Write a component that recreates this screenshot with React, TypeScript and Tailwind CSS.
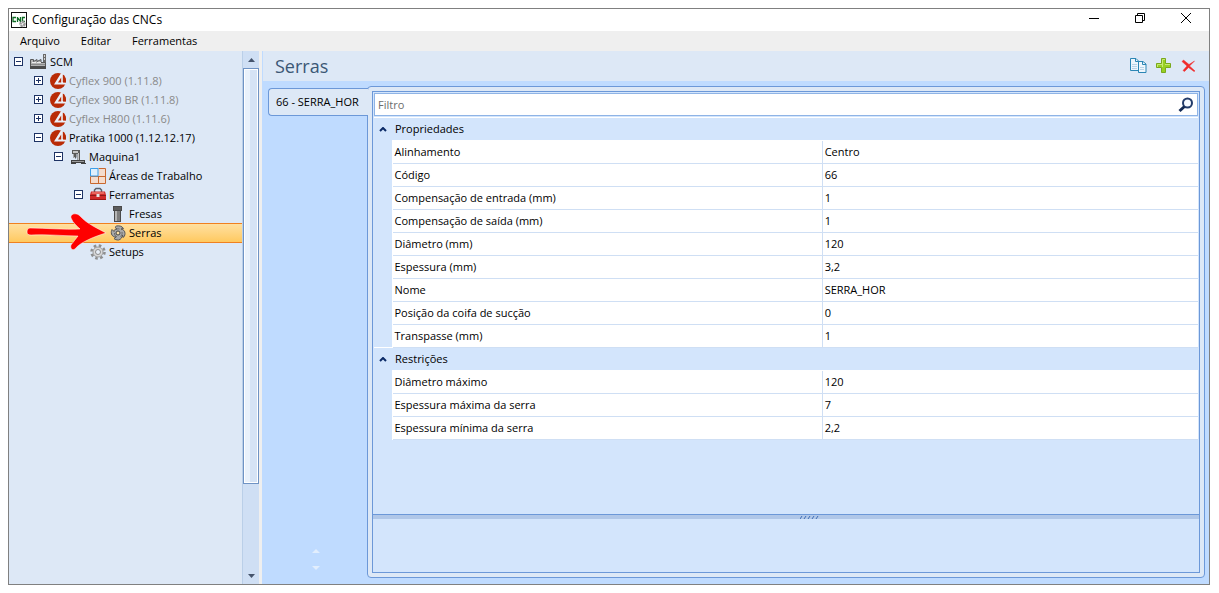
import React from "react";

type NodeProps = {
  label: string;
  pad: string;
  icon: React.ReactNode;
  sign?: "+" | "-";
  muted?: boolean;
  selected?: boolean;
};

const AppIcon = () => (
  <svg width="16" height="16" viewBox="0 0 16 16">
    <rect x="0.5" y="0.5" width="15" height="15" fill="#fff" stroke="#111" />
    <path
      d="M5 5.500H2V9.500H5M6.500 10V5M7 6L9 9M9.500 10V5M14 5.500H11.500V9.500H14"
      fill="none"
      stroke="#0c6b23"
      strokeWidth="1.300"
    />
    <circle cx="11.500" cy="12" r="2" fill="none" stroke="#9a9a9a" strokeWidth="2.500" strokeDasharray="2 .6" />
  </svg>
);

const FactoryIcon = () => (
  <svg width="17" height="16" viewBox="0 0 17 16">
    <path d="M13 0h3v10h-3z" fill="#6a6a6a" />
    <path d="M14 1h1v2h-1zM14 4h1v2h-1z" fill="#d4d4d4" />
    <path d="M.5 14V5.500H3.500V7.500L7 5.500V7.500L11 5.500V8.500H15.500V14Z" fill="#b4b4b4" stroke="#585858" />
    <path d="M2 8h4v1H2zM7 8h4v1H7z" fill="#ededed" />
    <path d="M1 10h14v1H1z" fill="#8b8b8b" />
    <path d="M0 12h16v3H0z" fill="#4c4c4c" />
  </svg>
);

const ScmIcon = () => (
  <svg width="16" height="16" viewBox="0 0 16 16">
    <circle cx="8" cy="8" r="8" fill="#b92b06" />
    <path d="M11 0L13 1V9.500H16V11.500H4L10.500 1Z" fill="#eaf0f9" />
    <path d="M11.200 4.500V9.500H8Z" fill="#b92b06" />
    <path d="M12.800 1.500C15 3 16 5.500 16 8V9.500L12.800 9Z" fill="#b92b06" />
  </svg>
);

const MachineIcon = () => (
  <svg width="16" height="16" viewBox="0 0 16 16">
    <path d="M2 1H10V12H7.500V5H6.500V8L5.500 10L4.500 8H3V5H2Z" fill="#5a5a5a" />
    <path d="M3 2h5v2H3zM8 4h1v8H8z" fill="#c4c4c4" />
    <path d="M3.500 5v4" stroke="#a8a8a8" />
    <path d="M1 11h14v3h1v1h-5v-1H6v1H1z" fill="#424242" />
    <path d="M2 12h12v1H2z" fill="#9c9c9c" />
  </svg>
);

const AreasIcon = () => (
  <svg width="16" height="16" viewBox="0 0 16 16">
    <path d="M1 8.500H15V15H1zM8.500 1H15V8H8.500z" fill="#f4dccd" />
    <path d="M8.500 .5h7v15H.5v-7M.5 8.500h15M8.500 8v7.500" fill="none" stroke="#c9682e" />
    <path d="M.5 .5h7.500v7.500H.5z" fill="#dff0fd" stroke="#3b9ee8" />
  </svg>
);

const ToolboxIcon = () => (
  <svg width="16" height="16" viewBox="0 0 16 16">
    <path d="M4.500 5V3L6 1.500H10L11.500 3V5" fill="none" stroke="#59606b" strokeWidth="1.500" />
    <path d="M1 4.500H15L16 8V13H0V8Z" fill="#d02a2a" />
    <path d="M2 5h12l.5 2h-13z" fill="#e8655e" />
    <path d="M0 8h16v1H0z" fill="#8e1a1a" />
    <path d="M6.500 7h3v3h-3z" fill="#e6e6e6" />
    <path d="M0 12h16v1H0z" fill="#9c1616" />
  </svg>
);

const CutterIcon = () => (
  <svg width="16" height="16" viewBox="0 0 16 16">
    <path d="M3 0h9v5h-1v11H4V5H3z" fill="#4a4a4a" />
    <path d="M5 5h2v10H5z" fill="#b5b5b5" />
    <path d="M7 5h3v10H7z" fill="#7d7d7d" />
    <path d="M4 1h7v3H4z" fill="#5c5c5c" />
  </svg>
);

const SawIcon = () => (
  <svg width="16" height="16" viewBox="0 0 16 16">
    <path
      d="M7 4C5 3 5 1.500 6.500 1C9 .5 12 1 13.500 3.500L11 4C13.500 4.500 15 6 15 8.500C15 10.500 14 12 13 12.500L12.500 10C12 12.500 11 14.500 8.500 15C6.500 15 5 14.500 4 13.500L6 12C4 12 2 11 1.500 9C1 7 1.500 5.500 2 4.500L4 6.500C4 5 5 4 7 4Z"
      fill="#a9a9a9"
      stroke="#565656"
    />
    <path d="M5 5C6 4 8 3.500 9.500 4M12 7C12.500 9 11.500 10.500 10.500 11.500M7 12C5 11 4.500 9.500 4.500 8" fill="none" stroke="#6a6a6a" />
    <circle cx="8" cy="8" r="2" fill="#ffe3a6" stroke="#444" />
  </svg>
);

const GearIcon = () => (
  <svg width="16" height="16" viewBox="0 0 16 16">
    <circle cx="8" cy="8" r="6.500" fill="none" stroke="#8d8d8d" strokeWidth="2.500" strokeDasharray="2.600 2.500" />
    <circle cx="8" cy="8" r="5" fill="#d8d8d8" stroke="#9c9c9c" />
    <circle cx="8" cy="8" r="2.500" fill="#e8eff8" stroke="#8d8d8d" />
  </svg>
);

const nodes: NodeProps[] = [
  { label: "SCM", pad: "pl-[5px]", icon: <FactoryIcon />, sign: "-" },
  { label: "Cyflex 900 (1.11.8)", pad: "pl-[25px]", icon: <ScmIcon />, sign: "+", muted: true },
  { label: "Cyflex 900 BR (1.11.8)", pad: "pl-[25px]", icon: <ScmIcon />, sign: "+", muted: true },
  { label: "Cyflex H800 (1.11.6)", pad: "pl-[25px]", icon: <ScmIcon />, sign: "+", muted: true },
  { label: "Pratika 1000 (1.12.12.17)", pad: "pl-[25px]", icon: <ScmIcon />, sign: "-" },
  { label: "Maquina1", pad: "pl-[45px]", icon: <MachineIcon />, sign: "-" },
  { label: "Áreas de Trabalho", pad: "pl-[65px]", icon: <AreasIcon /> },
  { label: "Ferramentas", pad: "pl-[65px]", icon: <ToolboxIcon />, sign: "-" },
  { label: "Fresas", pad: "pl-[85px]", icon: <CutterIcon /> },
  { label: "Serras", pad: "pl-[85px]", icon: <SawIcon />, selected: true },
  { label: "Setups", pad: "pl-[65px]", icon: <GearIcon /> },
];

const groups = [
  {
    title: "Propriedades",
    rows: [
      ["Alinhamento", "Centro"],
      ["Código", "66"],
      ["Compensação de entrada (mm)", "1"],
      ["Compensação de saída (mm)", "1"],
      ["Diâmetro (mm)", "120"],
      ["Espessura (mm)", "3,2"],
      ["Nome", "SERRA_HOR"],
      ["Posição da coifa de sucção", "0"],
      ["Transpasse (mm)", "1"],
    ],
  },
  {
    title: "Restrições",
    rows: [
      ["Diâmetro máximo", "120"],
      ["Espessura máxima da serra", "7"],
      ["Espessura mínima da serra", "2,2"],
    ],
  },
];

const TreeNode = ({ label, pad, icon, sign, muted, selected }: NodeProps) => (
  <li
    className={`flex items-center ${pad} ${
      selected
        ? "h-5 -mb-px border-y border-[#f08020] bg-linear-to-b from-[#ffe0a0] to-[#ffc95e]"
        : "h-[19px]"
    }`}
  >
    <span className="w-4 shrink-0">
      {sign && (
        <button aria-label={`${sign === "+" ? "Expandir" : "Recolher"} ${label}`} className="block">
          <svg width="9" height="9" viewBox="0 0 9 9">
            <rect x="0.5" y="0.5" width="8" height="8" fill="#fff" stroke="#1d3264" />
            <path d={sign === "+" ? "M2 4.500H7M4.500 2V7" : "M2 4.500H7"} stroke="#1d3264" />
          </svg>
        </button>
      )}
    </span>
    <button className={`flex items-center gap-[3px] whitespace-nowrap ${muted ? "text-[#8a8a8a]" : "text-black"}`}>
      {icon}
      {label}
    </button>
  </li>
);

const Sidebar = () => (
  <aside className="relative flex w-[250px] shrink-0">
    <ul className="min-w-0 flex-1 bg-[#dde8f6] pt-px">
      {nodes.map((node) => (
        <TreeNode key={node.label} {...node} />
      ))}
    </ul>
    <div className="flex w-[17px] flex-col items-center border-l border-[#bacfe8] bg-[#cfdff4]">
      <button aria-label="Rolar para cima" className="flex h-[17px] w-full items-center justify-center">
        <svg width="7" height="4" viewBox="0 0 7 4">
          <path d="M0 4L3.500 0L7 4Z" fill="#45546c" />
        </svg>
      </button>
      <div className="w-full flex-1">
        <div className="h-5/6 border border-[#6f93c4] bg-white p-px">
          <div className="h-full bg-linear-to-r from-[#e9f1fb] from-45% to-[#d5e3f5] to-45%" />
        </div>
      </div>
      <button aria-label="Rolar para baixo" className="flex h-[17px] w-full items-center justify-center">
        <svg width="7" height="4" viewBox="0 0 7 4">
          <path d="M0 0L3.500 4L7 0Z" fill="#45546c" />
        </svg>
      </button>
    </div>
    {/* pointer to the selected node */}
    <svg className="pointer-events-none absolute left-[17px] top-[161px]" width="82" height="40" viewBox="0 0 82 40">
      <path
        d="M4 16C2 16 1 18 1 20C1 22 2 23 5 23C21 22 38 24 52 24C50 27 47 30 45 33C44 36 46 39 49 37C54 30 70 24 80 21C73 17 61 12 54 4C50 0 44 2 45 6C47 11 51 14 54 17C38 18 20 16 4 16Z"
        fill="#fe0000"
        stroke="#fff"
        strokeOpacity="0.500"
      />
    </svg>
  </aside>
);

const PropertyGrid = () => (
  <table className="w-full table-fixed border-collapse">
    <colgroup>
      <col className="w-[18px]" />
      <col className="w-[52.2%]" />
      <col />
    </colgroup>
    {groups.map((group) => (
      <tbody key={group.title}>
        <tr className="h-[23px] border-t border-white">
          <td className="bg-[#d3e5fc] p-0">
            <button aria-label={`Recolher ${group.title}`} className="ml-[5px] block">
              <svg width="8" height="5" viewBox="0 0 8 5">
                <path d="M1 4L4 1L7 4" fill="none" stroke="#0b2a66" strokeWidth="2" />
              </svg>
            </button>
          </td>
          <th colSpan={2} className="border-b border-white bg-[#d3e5fc] p-0 pl-[3px] text-left font-normal">
            {group.title}
          </th>
        </tr>
        {group.rows.map(([name, value]) => (
          <tr key={name} className="h-[23px] bg-white">
            <td className="border-r border-white bg-[#d3e5fc] p-0" />
            <td className="border border-[#cfdff4] p-0 pl-[2px]">{name}</td>
            <td className="border-y border-[#cfdff4] p-0 pl-[2px]">{value}</td>
          </tr>
        ))}
      </tbody>
    ))}
  </table>
);

const Toolbar = () => (
  <div className="flex items-center gap-[9px]">
    <button aria-label="Copiar">
      <svg width="17" height="16" viewBox="0 0 17 16">
        <path d="M.5 .5H6L8.500 3V12.500H.5Z" fill="#eef6fc" stroke="#2b86b5" />
        <path d="M5.500 1V3.500H8" fill="none" stroke="#2b86b5" />
        <path d="M2 6.500H7M2 8.500H7M2 10.500H7" stroke="#b8d3e8" />
        <path d="M8.500 3.500H13L16 6V14.500H8.500Z" fill="#eef6fc" stroke="#2b86b5" />
        <path d="M12.500 4V6.500H16" fill="none" stroke="#2b86b5" />
        <path d="M10 9.500H14M10 11.500H14" stroke="#b8d3e8" />
      </svg>
    </button>
    <button aria-label="Adicionar">
      <svg width="16" height="16" viewBox="0 0 16 16">
        <path d="M5.500 .5H9.500V5.500H14.500V9.500H9.500V14.500H5.500V9.500H.5V5.500H5.500Z" fill="#98d022" stroke="#79a81c" />
        <path d="M6.500 9V1.500H9M1.500 9V6.500H6M9 6.500H14" fill="none" stroke="#c7ea74" />
      </svg>
    </button>
    <button aria-label="Excluir">
      <svg width="16" height="16" viewBox="0 0 16 16">
        <path d="M1 3.500L2.500 2L8 6.500L13.500 3L8.500 8L14 13L13 13.500L7.500 9.500L3.500 13.500L2 12.500L6 8Z" fill="#f02b2b" stroke="#f02b2b" strokeWidth=".5" />
      </svg>
    </button>
  </div>
);

const TitleBar = () => (
  <header className="flex h-[22px] items-center bg-white pl-[2px] pr-[17px]">
    <AppIcon />
    <h1 className="ml-[5px] flex-1 text-[12px]">Configuração das CNCs</h1>
    <div className="flex items-center gap-[34px] pb-1">
      <button aria-label="Minimizar">
        <svg width="12" height="12" viewBox="0 0 12 12">
          <path d="M1 6.500H11" stroke="#000" />
        </svg>
      </button>
      <button aria-label="Restaurar">
        <svg width="12" height="12" viewBox="0 0 12 12">
          <path d="M1.500 3.500H8.500V10.500H1.500ZM3.500 3V1.500H10.500V8.500H9" fill="none" stroke="#000" />
        </svg>
      </button>
      <button aria-label="Fechar">
        <svg width="12" height="12" viewBox="0 0 12 12">
          <path d="M1 1L11 11M11 1L1 11" stroke="#000" />
        </svg>
      </button>
    </div>
  </header>
);

const App = () => {
  return (
    <div className="h-screen bg-white py-2 pl-2 pr-[9px] font-['Open_Sans','Noto_Sans',sans-serif] text-[11px] leading-4 text-black">
      <div className="flex h-full flex-col border border-[#808080]">
        <TitleBar />
        <nav className="flex h-5 items-center gap-[21px] bg-[#efefef] pl-[11px]">
          <button>Arquivo</button>
          <button>Editar</button>
          <button>Ferramentas</button>
        </nav>

        <div className="flex min-h-0 flex-1">
          <Sidebar />
          <div className="w-[3px] shrink-0 bg-[#efefef]" />

          <main className="flex min-w-0 flex-1 flex-col border-l border-[#bfdbff] bg-[#bfdbff]">
            <div className="flex h-[30px] shrink-0 items-center justify-between bg-[#dde8f6] pl-3 pr-3">
              <h2 className="text-[18px] leading-6 text-[#3b5775]">Serras</h2>
              <Toolbar />
            </div>

            <div className="flex min-h-0 flex-1 pb-1.5 pl-[5px] pr-1 pt-[5px]">
              <div className="z-10 -mr-px flex w-[100px] shrink-0 flex-col pt-[2px]">
                <button className="h-7 whitespace-nowrap rounded-l border border-r-0 border-[#6c98d8] bg-[#dde8f6] pl-[7px] text-left">
                  66 - SERRA_HOR
                </button>
                <div className="mb-2 mt-auto flex flex-col items-center gap-[13px] pr-1">
                  <svg width="8" height="4" viewBox="0 0 8 4">
                    <path d="M0 4L4 0L8 4Z" fill="#e2eefd" />
                  </svg>
                  <svg width="8" height="4" viewBox="0 0 8 4">
                    <path d="M0 0L4 4L8 0Z" fill="#e2eefd" />
                  </svg>
                </div>
              </div>

              <div className="flex min-w-0 flex-1 rounded border border-[#6c98d8] bg-[#dde8f6] p-1">
                <div className="flex min-w-0 flex-1 flex-col border border-[#6c98d8] bg-[#d3e5fc]">
                  <div className="min-h-0 flex-1 px-px pt-px">
                    <label className="mb-px flex h-[23px] items-center border border-[#8fb4e6] bg-white px-[3px]">
                      <input
                        type="text"
                        aria-label="Filtro"
                        placeholder="Filtro"
                        className="min-w-0 flex-1 outline-none placeholder:text-[#6d6d6d]"
                      />
                      <svg width="16" height="16" viewBox="0 0 16 16">
                        <circle cx="9.500" cy="6" r="4.500" fill="#f6faff" stroke="#233c6b" strokeWidth="2" />
                        <path d="M6.500 9.500L1.500 14" stroke="#132a54" strokeWidth="3" />
                      </svg>
                    </label>
                    <PropertyGrid />
                  </div>
                  <div className="flex h-[5px] items-center justify-center border-t border-[#6c98d8] bg-[#b0c7e8] pl-12">
                    <svg width="20" height="3" viewBox="0 0 20 3">
                      <path d="M0 3L2 0M4 3L6 0M8 3L10 0M12 3L14 0M16 3L18 0" stroke="#3f6db5" />
                    </svg>
                  </div>
                  <div className="h-[53px]" />
                </div>
              </div>
            </div>
          </main>
        </div>
      </div>
    </div>
  );
};

export default App;
